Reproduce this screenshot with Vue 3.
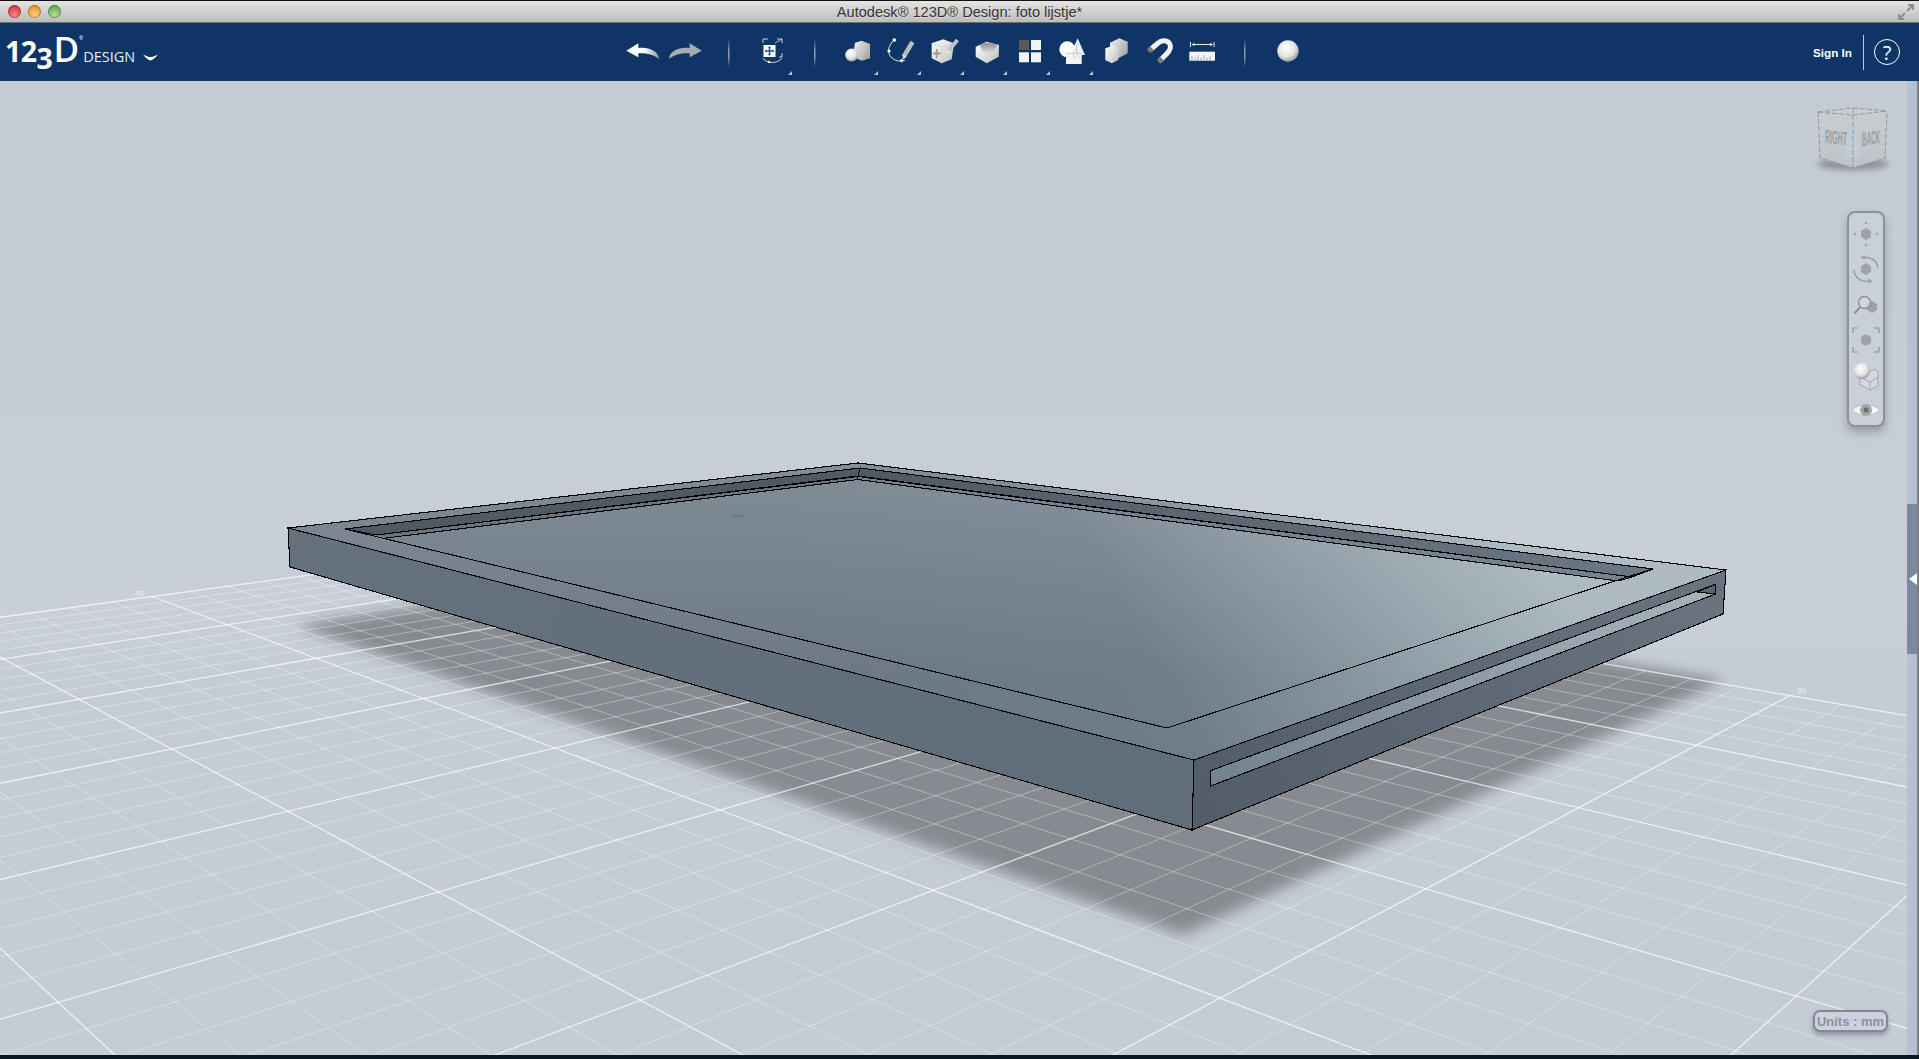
<template>
  <div class="window">
    <header class="titlebar">
      <div class="lights">
        <span class="light red"></span>
        <span class="light amber"></span>
        <span class="light green"></span>
      </div>
      <div class="title">Autodesk® 123D® Design: foto lijstje*</div>
      <div class="resize">
        <svg width="16" height="16" viewBox="0 0 16 16">
          <path d="M9 7 L15 1 M10 1 H15 V6 M7 9 L1 15 M1 10 V15 H6" fill="none" stroke="#8c8c8c" stroke-width="1.8" />
        </svg>
      </div>
    </header>

    <nav class="toolbar">
      <div class="logo">
        <span class="logo-num">12</span><span class="logo-num drop">3</span><span class="logo-d">D</span><span class="logo-reg">®</span>
        <span class="logo-word">DESIGN</span>
        <svg class="logo-arrow" width="15" height="7" viewBox="0 0 15 7">
          <path d="M0 0.5 C4 2.5 6 3 7.5 3 C9 3 11 2.5 15 0.5 C12 4 9.5 6.5 7.5 6.5 C5.5 6.5 3 4 0 0.5 Z" fill="#fff" />
        </svg>
      </div>

      <div class="tools">
        <!-- undo -->
        <svg class="tool" viewBox="0 0 43 58">
          <path d="M5.3 27.7 L17.3 20.3 V25 C29 24 37 28 38 36 C32 31 25 30 17.3 30.3 V34.3 Z" fill="url(#undoFill)" />
        </svg>
        <!-- redo -->
        <svg class="tool" viewBox="0 0 43 58">
          <path d="M37.7 27.7 L25.7 20.3 V25 C14 24 6 28 5 36 C11 31 18 30 25.7 30.3 V34.3 Z" fill="#a9adb3" />
        </svg>
        <div class="sep"></div>
        <!-- view -->
        <svg class="tool" viewBox="0 0 43 58">
          <path d="M13 20 V16 H18 M27 16 H32 V20 M32 30 V34 H29 M13 35 C16 41 28 41 32 35" fill="none" stroke="#dfe5ec" stroke-width="0.9" />
          <path d="M25 20 L32 16" stroke="#dfe5ec" stroke-width="0.8" />
          <rect x="13.5" y="22" width="12" height="12" fill="#fff" />
          <path d="M19.5 24 V32 M15.5 28 H23.5" stroke="#2a5c92" stroke-width="1.6" />
          <path d="M19.5 23 L18 25 H21 Z M19.5 33 L18 31 H21 Z M14.5 28 L16.5 26.5 V29.5 Z M24.5 28 L22.5 26.5 V29.5 Z" fill="#2a5c92" />
          <circle cx="19" cy="39" r="1.2" fill="#fff" />
          <path class="corner" d="M38 52 L42 52 L42 48 Z" />
        </svg>
        <div class="sep"></div>
        <!-- primitives -->
        <svg class="tool" viewBox="0 0 43 58">
          <path d="M19 19.7 L25.7 17.7 L34 21 V35.3 L25.7 37.7 L17 34 Z" fill="url(#boxFill)" />
          <circle cx="15.7" cy="32" r="6.5" fill="url(#ballFill)" />
          <path class="corner" d="M38 52 L42 52 L42 48 Z" />
        </svg>
        <!-- sketch -->
        <svg class="tool" viewBox="0 0 43 58">
          <path d="M15.3 17 C9 22 8 30 12 34 C16 38 20 39 26 37" fill="none" stroke="#e8edf3" stroke-width="1" />
          <circle cx="15.3" cy="17" r="1.8" fill="#fff" />
          <circle cx="10" cy="28" r="1.6" fill="#fff" />
          <circle cx="22.7" cy="37.7" r="1.6" fill="#fff" />
          <path d="M33.5 19 L24.5 34" stroke="#b9bcc0" stroke-width="4.4" />
          <path d="M24.8 31.5 L23 37 L27 34" fill="#e6e6e6" />
          <path class="corner" d="M38 52 L42 52 L42 48 Z" />
        </svg>
        <!-- construct -->
        <svg class="tool" viewBox="0 0 43 58">
          <path d="M9.7 20.3 L21.3 16.3 L32 20.3 L29.7 36.3 L19.7 40.3 L9.7 35.3 Z" fill="url(#boxFill2)" />
          <path d="M9.7 20.3 L19.7 24 L32 20.3 M19.7 24 V40.3" fill="none" stroke="#c9ccd0" stroke-width="0.6" />
          <path d="M14.7 26 V35 M11 30.5 H18.5" stroke="#9a9a9a" stroke-width="1.8" />
          <path d="M35.5 17 L26 28.5" stroke="#bfc1c4" stroke-width="3.8" />
          <path d="M26.5 26.5 L24 31.5 L28.5 29" fill="#ececec" />
          <path class="corner" d="M38 52 L42 52 L42 48 Z" />
        </svg>
        <!-- modify -->
        <svg class="tool" viewBox="0 0 43 58">
          <path d="M10.7 23.7 L21.7 18.7 L34 22 L33.7 33.7 L21.7 40.3 L10.7 33.7 Z" fill="url(#boxFill2)" />
          <path d="M15 21.7 C20 19 28 20 32 22 C30 29 26 31 22.5 31 C19 31 16 27 15 21.7 Z" fill="url(#scoopFill)" />
          <path class="corner" d="M38 52 L42 52 L42 48 Z" />
        </svg>
        <!-- pattern -->
        <svg class="tool" viewBox="0 0 43 58">
          <rect x="11" y="17" width="10" height="10" fill="#5a5a5c" />
          <rect x="23" y="17" width="10" height="10" fill="#f2f3f5" />
          <rect x="11" y="29.3" width="10" height="10" fill="#f2f3f5" />
          <rect x="23" y="29.3" width="10" height="10" fill="#f2f3f5" />
          <path class="corner" d="M38 52 L42 52 L42 48 Z" />
        </svg>
        <!-- combine -->
        <svg class="tool" viewBox="0 0 43 58">
          <path d="M26.7 15.3 L34 32 H19 Z" fill="#eef0f2" />
          <circle cx="16.3" cy="26.3" r="8" fill="#fff" />
          <rect x="15" y="30.3" width="15.7" height="10.7" fill="#f3f4f6" />
          <path d="M15 30.3 H30.7 M24.3 26 C21 28 22 34 25 36 M27 20 C24 24 26 32 28 34" fill="none" stroke="#b2b5b9" stroke-width="0.7" />
          <path class="corner" d="M38 52 L42 52 L42 48 Z" />
        </svg>
        <!-- solid -->
        <svg class="tool" viewBox="0 0 43 58">
          <path d="M16 19.7 L25.3 15.3 L33.7 18.7 V30.3 L24.3 35.3 L16 30 Z" fill="url(#boxFill)" />
          <path d="M16 19.7 L24.5 23 L33.7 18.7 M24.5 23 V35" fill="none" stroke="#c3c5c9" stroke-width="0.5" />
          <path d="M11.3 25.3 L21 22 L24.3 25.3 V37 L17.7 40.3 L11.3 37 Z" fill="url(#boxFill2)" />
        </svg>
        <!-- snap -->
        <svg class="tool" viewBox="0 0 43 58">
          <path d="M13 27 L20.5 20.5 C25 16.5 31 17 33 21.5 C35 26 31 29.5 29 31.5 L23 37.5" fill="none" stroke="#f1f2f4" stroke-width="5" />
          <path d="M11.5 28.3 L15 25.2 M21.5 39 L24.8 35.6" stroke="#77797d" stroke-width="5" />
        </svg>
        <!-- measure -->
        <svg class="tool" viewBox="0 0 43 58">
          <path d="M10.5 19 V24 M34 19 V24 M12 21.5 H32.5" stroke="#fff" stroke-width="0.9" fill="none" />
          <path d="M11.5 21.5 L14.5 20 V23 Z M33 21.5 L30 20 V23 Z" fill="#fff" />
          <rect x="9.3" y="28.7" width="25.7" height="9" fill="#f5f6f7" />
          <path d="M12 37 V33 M15 37 V34.5 M18 37 V32 M21 37 V34.5 M24 37 V32 M27 37 V34.5 M30 37 V33" stroke="#8d8f93" stroke-width="0.8" />
        </svg>
        <div class="sep"></div>
        <!-- material -->
        <svg class="tool" viewBox="0 0 43 58">
          <circle cx="22" cy="28" r="10.7" fill="url(#ballFill)" />
        </svg>
      </div>

      <div class="account">
        <span class="signin">Sign In</span>
        <span class="divider"></span>
        <span class="help">?</span>
      </div>
    </nav>

    <main class="stage">
      <div class="viewport">
        <svg class="scene" viewBox="0 81 1907 974">
          <defs>
            <linearGradient id="undoFill" x1="0" x2="1" y1="0" y2="0">
              <stop offset="0.55" stop-color="#fff" />
              <stop offset="1" stop-color="#8e99a8" />
            </linearGradient>
            <linearGradient id="boxFill" x1="0" x2="1" y1="0" y2="0.6">
              <stop offset="0" stop-color="#f4f4f4" />
              <stop offset="1" stop-color="#a9a9a9" />
            </linearGradient>
            <linearGradient id="boxFill2" x1="0" x2="1" y1="0" y2="0.8">
              <stop offset="0" stop-color="#ffffff" />
              <stop offset="1" stop-color="#c4c4c4" />
            </linearGradient>
            <linearGradient id="scoopFill" x1="0" x2="0" y1="0" y2="1">
              <stop offset="0" stop-color="#8c8c8c" />
              <stop offset="1" stop-color="#e8e8e8" />
            </linearGradient>
            <radialGradient id="ballFill" cx="0.42" cy="0.35" r="0.7">
              <stop offset="0" stop-color="#ffffff" />
              <stop offset="0.6" stop-color="#e2e2e2" />
              <stop offset="1" stop-color="#8f8f8f" />
            </radialGradient>
            <filter id="soft" x="-5%" y="-10%" width="110%" height="120%">
              <feGaussianBlur stdDeviation="7" />
            </filter>
            <linearGradient id="topFill" gradientUnits="userSpaceOnUse" x1="900" y1="800" x2="1500" y2="480">
              <stop offset="0" stop-color="#6c7985" />
              <stop offset="0.42" stop-color="#6f7d89" />
              <stop offset="1" stop-color="#a8b6bd" />
            </linearGradient>
            <linearGradient id="topSheen" gradientUnits="userSpaceOnUse" x1="0" y1="465" x2="0" y2="680">
              <stop offset="0" stop-color="#fff" stop-opacity="0.14" />
              <stop offset="1" stop-color="#fff" stop-opacity="0" />
            </linearGradient>
            <linearGradient id="frontFill" gradientUnits="userSpaceOnUse" x1="290" y1="530" x2="1190" y2="800">
              <stop offset="0" stop-color="#65717d" />
              <stop offset="1" stop-color="#606d7a" />
            </linearGradient>
            <linearGradient id="sideFill" gradientUnits="userSpaceOnUse" x1="1200" y1="800" x2="1720" y2="590">
              <stop offset="0" stop-color="#535d69" />
              <stop offset="1" stop-color="#6a7480" />
            </linearGradient>
            <linearGradient id="slotFill" gradientUnits="userSpaceOnUse" x1="1210" y1="780" x2="1715" y2="590">
              <stop offset="0" stop-color="#728290" />
              <stop offset="1" stop-color="#a6b4bb" />
            </linearGradient>
            <linearGradient id="wallFill" gradientUnits="userSpaceOnUse" x1="860" y1="470" x2="1650" y2="570">
              <stop offset="0" stop-color="#4f5a65" />
              <stop offset="1" stop-color="#6a7885" />
            </linearGradient>
          </defs>

          <!-- shadow on the ground -->
          <polygon points="295,625 860,540 1725,680 1183,935" fill="#878b91" filter="url(#soft)" />

          <!-- ground grid -->
          <line v-for="l in minorLines" :key="l.id" :x1="l.x1" :y1="l.y1" :x2="l.x2" :y2="l.y2" class="grid-minor" />
          <line v-for="l in majorLines" :key="l.id" :x1="l.x1" :y1="l.y1" :x2="l.x2" :y2="l.y2" class="grid-major" />
          <text x="1797" y="693" class="grid-label">90</text>
          <text x="133" y="596" class="grid-label">-90</text>

          <!-- photo frame -->
          <g class="edge">
            <polygon points="288,528 290,567 1192,830 1194,760" fill="url(#frontFill)" />
            <polygon points="1194,760 1726,570 1723,614 1192,830" fill="url(#sideFill)" />
            <polygon points="1210.5,770.7 1715.6,584.3 1715.6,594 1210.5,786" fill="url(#slotFill)" />
            <polygon points="1715.6,584.3 1715.6,594 1697,592" fill="#5b6672" />
            <polygon points="288,528 858,463 1726,570 1194,760" fill="url(#topFill)" />
            <polygon points="288,528 858,463 1726,570 1194,760" fill="url(#topSheen)" stroke="none" />
            <polygon points="345,529 860,468 858,476 376,535" fill="#4f5a65" />
            <polygon points="860,468 1653,569 1632,577 858,476" fill="url(#wallFill)" />
            <polyline points="376,535 858,476.5 858,479.5 386,538" fill="#69747f" />
            <polyline points="858,476.5 1632,577 1618,581 858,479.5" fill="#75838e" />
            <polyline points="345,529 1167,728 1624,578 1653,569" fill="none" />
          </g>
          <ellipse cx="738" cy="516" rx="6" ry="1.4" fill="#6c7883" />
        </svg>

        <!-- view cube -->
        <svg class="cube" width="85" height="80" viewBox="0 0 85 80">
          <defs>
            <filter id="cubeBlur" x="-20%" y="-80%" width="140%" height="260%">
              <feGaussianBlur stdDeviation="3" />
            </filter>
            <linearGradient id="cubeFill" x1="0" x2="0" y1="0" y2="1">
              <stop offset="0" stop-color="#cacdd2" />
              <stop offset="1" stop-color="#bfc3c8" />
            </linearGradient>
          </defs>
          <ellipse cx="43" cy="64" rx="36" ry="6" fill="#7f848b" opacity="0.85" filter="url(#cubeBlur)" />
          <polygon points="8,12 43,8 77,11 75,58 43,68 10,58" fill="url(#cubeFill)" />
          <rect x="36" y="23" width="14" height="34" fill="#c2ccd7" />
          <path d="M8 12 L43 15 L77 11 M8 12 L43 8 L77 11 M8 12 L10 58 L43 68 L75 58 L77 11 M43 8 V68" fill="none" stroke="#95989d" stroke-width="1" stroke-dasharray="5 2" />
          <text class="cube-label" transform="translate(15 43) skewY(6)" textLength="22" lengthAdjust="spacingAndGlyphs">RIGHT</text>
          <text class="cube-label" transform="translate(52 46) skewY(-9)" textLength="18" lengthAdjust="spacingAndGlyphs">BACK</text>
        </svg>

        <!-- navigation bar -->
        <div class="navbar">
          <svg class="nav-icon" viewBox="0 0 34 34">
            <polygon class="hex" points="17,11 22,14 22,20 17,23 12,20 12,14" />
            <path class="nav-arrow" d="M17 4 L15.2 7 H18.8 Z M17 30 L15.2 27 H18.8 Z M4 17 L7 15.2 V18.8 Z M30 17 L27 15.2 V18.8 Z" />
          </svg>
          <svg class="nav-icon" viewBox="0 0 34 34">
            <polygon class="hex" points="17,11 22,14 22,20 17,23 12,20 12,14" />
            <path class="nav-line" d="M15 5.5 A12 12 0 0 1 29 16 M5 18 A12 12 0 0 0 20 29" />
            <path class="nav-arrow" d="M11 5.5 L16 3 V8 Z M24 29 L19 26.5 V31.5 Z" />
          </svg>
          <svg class="nav-icon" viewBox="0 0 34 34">
            <polygon class="hex" points="23,14 28,17 28,23 23,26 18,23 18,17" />
            <circle cx="15.5" cy="15.5" r="6" fill="#d5dae0" fill-opacity="0.7" stroke="#8d9095" stroke-width="1.4" />
            <path d="M11 20 L5.5 26.5" stroke="#8d9095" stroke-width="2" />
          </svg>
          <svg class="nav-icon" viewBox="0 0 34 34">
            <polygon class="hex" points="17,11 22,14 22,20 17,23 12,20 12,14" />
            <path class="nav-line" d="M4 10 V5 H9 M25 5 H30 V10 M30 24 V29 H25 M9 29 H4 V24" />
          </svg>
          <svg class="nav-icon" viewBox="0 0 34 34">
            <path d="M13 17 L26 11 L29 14 V28 L21 32 L10 26 Z" fill="#d6dadf" fill-opacity="0.8" stroke="#9a9da1" stroke-width="0.8" />
            <path d="M13 20 L21 24 L29 19 M21 24 V32" fill="none" stroke="#9a9da1" stroke-width="0.8" />
            <circle cx="13" cy="13" r="8" fill="url(#ballFill)" />
          </svg>
          <svg class="nav-icon" viewBox="0 0 34 34">
            <path d="M3.5 17 C9 10 25 10 30.5 17 C25 24 9 24 3.5 17 Z" fill="#f4f5f6" stroke="#a5a8ac" stroke-width="0.6" />
            <circle cx="17" cy="17" r="6" fill="#a3a5a9" />
            <circle cx="17" cy="17" r="2.5" fill="#66686c" />
          </svg>
        </div>

        <div class="units">Units : mm</div>
      </div>

      <aside class="panel-strip">
        <div class="panel-handle"><span class="panel-arrow"></span></div>
      </aside>
    </main>

    <footer class="bottom"></footer>
  </div>
</template>

<script setup>
  import { computed } from 'vue'

  // Crossings of the heavy grid lines read off the screenshot: [column, row, x, y]
  const samples = [
    [0, 4, 155, 597], [1, 4, 227, 625], [2, 4, 315, 658], [3, 4, 423, 699],
    [4, 4, 553, 748], [5, 4, 720, 810], [6, 4, 933, 890], [7, 4, 1222, 998],
    [1, 5, 0, 658], [2, 5, 80, 699], [3, 5, 173, 749], [4, 5, 288, 811],
    [5, 5, 438, 892], [6, 5, 643, 1001], [5, 6, 59, 1003],
    [7, 3, 1425, 888], [7, 2, 1578, 808], [7, 1, 1694, 746], [7, 0, 1792, 695],
  ]

  // Least squares fit of the ground plane homography (coordinates in units of 1000px)
  function fitPlane(points) {
    const n = 8
    const m = Array.from({ length: n }, () => new Array(n + 1).fill(0))
    const add = (row, rhs) => {
      for (let a = 0; a < n; a++) {
        for (let b = 0; b < n; b++) m[a][b] += row[a] * row[b]
        m[a][n] += row[a] * rhs
      }
    }
    points.forEach(([u, v, px, py]) => {
      const x = px / 1000
      const y = py / 1000
      add([u, v, 1, 0, 0, 0, -u * x, -v * x], x)
      add([0, 0, 0, u, v, 1, -u * y, -v * y], y)
    })
    for (let c = 0; c < n; c++) {
      let pivot = c
      for (let r = c + 1; r < n; r++) if (Math.abs(m[r][c]) > Math.abs(m[pivot][c])) pivot = r
      ;[m[c], m[pivot]] = [m[pivot], m[c]]
      for (let r = 0; r < n; r++) {
        if (r === c) continue
        const f = m[r][c] / m[c][c]
        for (let k = c; k <= n; k++) m[r][k] -= f * m[c][k]
      }
    }
    return m.map((row, i) => row[n] / row[i])
  }

  const h = fitPlane(samples)
  const weight = (u, v) => h[6] * u + h[7] * v + 1
  const project = (u, v) => {
    const w = weight(u, v)
    return [((h[0] * u + h[1] * v + h[2]) / w) * 1000, ((h[3] * u + h[4] * v + h[5]) / w) * 1000]
  }

  function segment(u1, v1, u2, v2, id) {
    // pull the near end back until it stays in front of the camera
    let t = 1
    while (weight(u1 + (u2 - u1) * t, v1 + (v2 - v1) * t) < 0.04 && t > 0.001) t *= 0.8
    const [x1, y1] = project(u1, v1)
    const [x2, y2] = project(u1 + (u2 - u1) * t, v1 + (v2 - v1) * t)
    return { id, x1, y1, x2, y2 }
  }

  function buildLines(major) {
    const out = []
    const far = 40
    for (let k = 0; k <= far * 5; k++) {
      const isMajor = k % 5 === 0
      if (isMajor !== major) continue
      const pos = k / 5
      if (weight(pos, 0) > 0.04) out.push(segment(pos, 0, pos, far, `u${k}`))
      if (weight(0, pos) > 0.04) out.push(segment(0, pos, far, pos, `v${k}`))
    }
    return out
  }

  const minorLines = computed(() => buildLines(false))
  const majorLines = computed(() => buildLines(true))
</script>

<style scoped>
  .window {
    width: 1919px;
    height: 1059px;
    display: flex;
    flex-direction: column;
    overflow: hidden;
    font-family: 'Liberation Sans', Arial, sans-serif;
    background: #c4ccd6;
  }

  .titlebar {
    height: 23px;
    box-sizing: border-box;
    display: grid;
    grid-template-columns: 1fr auto 1fr;
    align-items: center;
    border-top: 1px solid #111;
    border-bottom: 1px solid #6e6e6e;
    background: linear-gradient(#e4e4e4, #bcbcbc);
  }

  .lights {
    display: flex;
    gap: 7px;
    padding-left: 8px;
  }

  .light {
    width: 13px;
    height: 13px;
    border-radius: 50%;
    box-shadow: inset 0 0 0 1px rgba(0, 0, 0, 0.25);
  }

  .red { background: radial-gradient(circle at 50% 75%, #f58a8a, #dc3a42 70%); }
  .amber { background: radial-gradient(circle at 50% 75%, #fbd07c, #e39a2e 70%); }
  .green { background: radial-gradient(circle at 50% 75%, #b4e29a, #6aae4f 70%); }

  .title {
    font-size: 14.6px;
    color: #333;
    text-shadow: 0 1px 0 rgba(255, 255, 255, 0.4);
  }

  .resize {
    display: flex;
    justify-content: flex-end;
    padding-right: 5px;
  }

  .resize svg { display: block; }

  .toolbar {
    height: 58px;
    display: grid;
    grid-template-columns: 621px 1fr auto;
    background: #0e3566;
    color: #fff;
  }

  .logo {
    padding-left: 5px;
    height: 58px;
    line-height: 30px;
    white-space: nowrap;
    font-family: 'Open Sans', sans-serif;
  }

  .logo-num {
    font-size: 28.5px;
    font-weight: 700;
    letter-spacing: -0.5px;
  }

  .logo-num.drop { vertical-align: -7px; }

  .logo-d {
    font-size: 35px;
    font-weight: 600;
    margin-left: 1px;
  }

  .logo-reg {
    font-size: 5px;
    vertical-align: 22px;
  }

  .logo-word {
    font-size: 14.5px;
    font-weight: 400;
    color: #e6ebf1;
  }

  .logo-arrow { margin-left: 8px; vertical-align: 1px; }

  .tools { display: flex; }

  .tool {
    width: 43px;
    height: 58px;
    flex: none;
  }

  .corner { fill: #b8c3cf; }

  .sep {
    width: 43px;
    height: 58px;
    flex: none;
    background: linear-gradient(transparent 15px, #8d9db1 28px, #8d9db1 34px, transparent 44px) center / 1.5px 100% no-repeat;
  }

  .account {
    display: flex;
    align-items: center;
    padding-right: 19px;
  }

  .signin {
    font-size: 11.7px;
    font-weight: 700;
    margin-top: 1px;
  }

  .divider {
    width: 1px;
    height: 35px;
    margin: 0 10px 0 11px;
    background: #a8d0e0;
  }

  .help {
    width: 24px;
    height: 24px;
    border: 1.3px solid #fff;
    border-radius: 50%;
    display: flex;
    align-items: center;
    justify-content: center;
    font-size: 20px;
    font-family: 'Open Sans', sans-serif;
  }

  .stage {
    flex: 1;
    display: flex;
    min-height: 0;
    border-right: 2px solid #7e7e7e;
  }

  .viewport {
    flex: 1;
    position: relative;
    background: linear-gradient(#c3cbd5, #c8cfd8 55%, #c4ccd6 62%);
  }

  .scene {
    position: absolute;
    inset: 0;
    width: 100%;
    height: 100%;
  }

  .grid-minor {
    stroke: rgba(255, 255, 255, 0.42);
    stroke-width: 0.8;
  }

  .grid-major {
    stroke: rgba(255, 255, 255, 0.7);
    stroke-width: 1.3;
  }

  .grid-label {
    font-size: 8px;
    fill: #eef1f4;
  }

  .edge polygon,
  .edge polyline {
    stroke: #000;
    stroke-width: 1.1;
    stroke-linejoin: miter;
    shape-rendering: crispEdges;
  }

  .cube {
    position: absolute;
    top: 19px;
    right: 12px;
  }

  .cube-label {
    font-size: 19px;
    font-weight: 700;
    fill: #9a9ea6;
  }

  .navbar {
    position: absolute;
    top: 130px;
    right: 22px;
    width: 38px;
    height: 216px;
    box-sizing: border-box;
    padding-top: 4px;
    display: flex;
    flex-direction: column;
    align-items: center;
    gap: 1.2px;
    background: #c8d0da;
    border: 2px solid #8e9197;
    border-radius: 8px;
    box-shadow: 0 5px 8px rgba(60, 65, 75, 0.35);
  }

  .nav-icon {
    width: 34px;
    height: 34px;
    flex: none;
  }

  .hex { fill: #a0a2a6; }
  .nav-arrow { fill: #a0a3a7; }

  .nav-line {
    fill: none;
    stroke: #8f9297;
    stroke-width: 1.2;
  }

  .units {
    position: absolute;
    right: 19px;
    bottom: 23px;
    width: 75px;
    height: 22px;
    box-sizing: border-box;
    display: flex;
    align-items: center;
    justify-content: center;
    background: #cbd1e0;
    border: 2px solid #85888e;
    border-radius: 7px;
    font-size: 13px;
    font-weight: 700;
    color: #8d9197;
    white-space: nowrap;
    box-shadow: 0 3px 5px rgba(60, 65, 75, 0.4);
  }

  .panel-strip {
    width: 10px;
    flex: none;
    background: #b4c2d4;
    padding-top: 423px;
    box-sizing: border-box;
  }

  .panel-handle {
    height: 150px;
    background: #7a8a9c;
    display: flex;
    align-items: center;
    justify-content: flex-end;
  }

  .panel-arrow {
    width: 0;
    height: 0;
    border-top: 6px solid transparent;
    border-bottom: 6px solid transparent;
    border-right: 8px solid #fff;
  }

  .bottom {
    height: 4px;
    background: #0a1620;
  }
</style>
